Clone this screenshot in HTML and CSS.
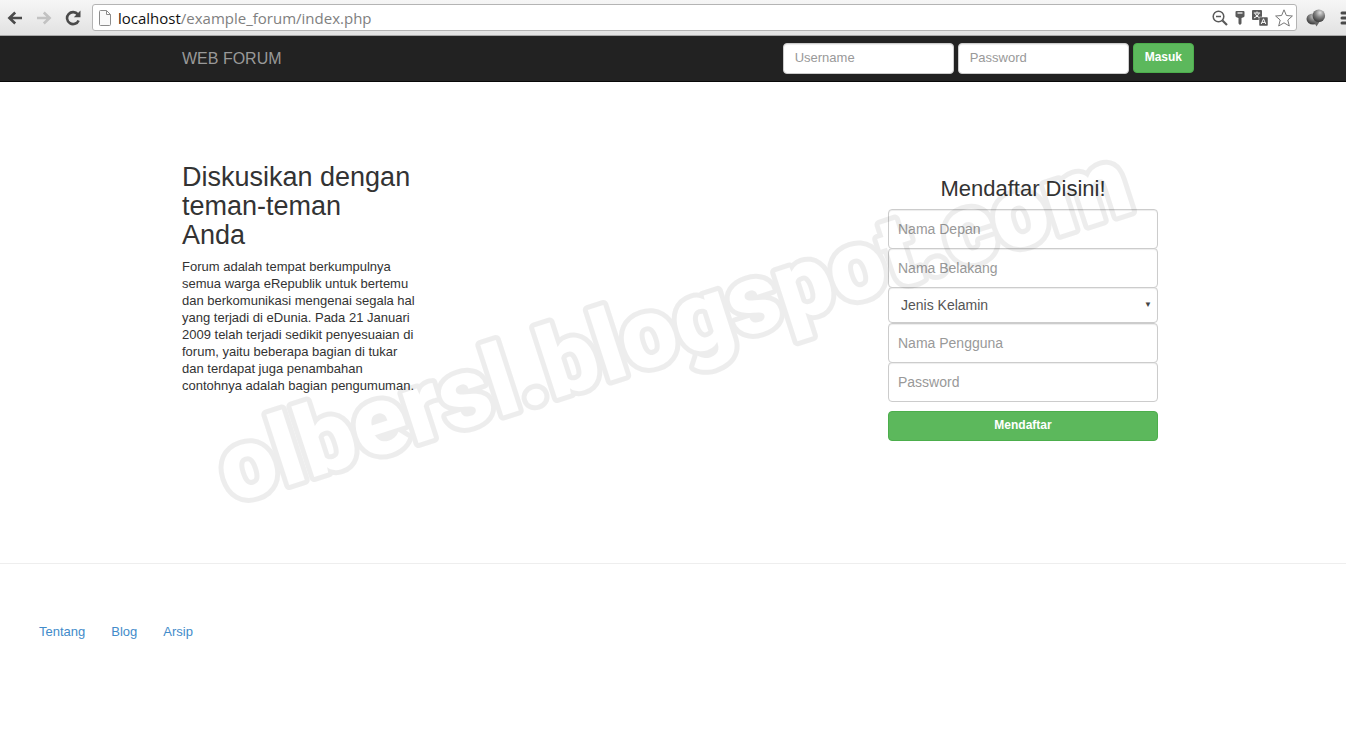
FILE: index.html
```html
<!DOCTYPE html>
<html lang="id">
<head>
    <meta charset="UTF-8">
    <meta name="viewport" content="width=device-width, initial-scale=1.0">
    <title>Web Forum</title>
    <link rel="stylesheet" href="styles.css">
</head>
<body>

    <div class="toolbar">
        <button class="tool" type="button" aria-label="Back">
            <svg width="16" height="14" viewBox="0 0 16 14" fill="none" stroke="#4a4a4a" stroke-width="2.6"><path d="M15 7H3M8.2 1.5L2.4 7l5.8 5.5"/></svg>
        </button>
        <button class="tool" type="button" aria-label="Forward">
            <svg width="16" height="14" viewBox="0 0 16 14" fill="none" stroke="#c2c2c2" stroke-width="2.6"><path d="M1 7h12M7.8 1.5L13.6 7l-5.8 5.5"/></svg>
        </button>
        <button class="tool" type="button" aria-label="Reload">
            <svg width="16" height="16" viewBox="0 0 16 16" fill="none" stroke="#4a4a4a" stroke-width="2.6"><path d="M12.8 4.4A6 6 0 1 0 13.6 10.4"/><path d="M15.5 .5V7.2H8.8z" fill="#4a4a4a" stroke="none"/></svg>
        </button>

        <div class="address">
            <svg width="12" height="16" viewBox="0 0 12 16" fill="#fafafa" stroke="#8c8c8c"><path d="M.5 1.5Q.5.5 1.5.5H7.5L11.5 4.5V14.5Q11.5 15.5 10.5 15.5H1.5Q.5 15.5.5 14.5zM7.5.5V4.5H11.5"/></svg>
            <div class="url"><span>localhost</span>/example_forum/index.php</div>
            <svg width="16" height="16" viewBox="0 0 16 16" fill="none" stroke="#5a5a5a"><circle cx="6.5" cy="6.5" r="5.3" stroke-width="1.5"/><path d="M4 6.5h5" stroke-width="1.5"/><path d="M10.5 10.5l4.5 4.5" stroke-width="2.2"/></svg>
            <svg width="10" height="16" viewBox="0 0 10 16"><path d="M1.5 1h7Q9.5 1 9.5 2V6Q9.5 7 8.5 7.3L6.5 8V13.5L5 15 3.5 13.5V8L1.5 7.3Q.5 7 .5 6V2Q.5 1 1.5 1z" fill="#5a5a5a"/><path d="M2.5 3h5" stroke="#fff" stroke-width="1.2"/></svg>
            <svg width="16" height="16" viewBox="0 0 16 16"><rect width="10" height="10" rx="1" fill="#5a5a5a"/><path d="M5 1.5v1.3M1.8 3h6.4M3 3.3Q4 6.5 8 8M7 3.3Q6 6.5 2 8" fill="none" stroke="#fff"/><rect x="7" y="7" width="9" height="9" rx="1" fill="#5a5a5a" stroke="#fff" stroke-width=".5"/><path d="M9.2 14L11.5 8.8 13.8 14M10 12.4h3" fill="none" stroke="#fff"/></svg>
            <svg width="18" height="18" viewBox="0 0 18 18" fill="#fff" stroke="#777" stroke-linejoin="round"><path d="M9 .8L11.4 6.5 17.4 7 12.8 11 14.3 17 9 13.8 3.7 17 5.2 11 .6 7 6.6 6.5z"/></svg>
        </div>

        <svg class="extension" width="20" height="18" viewBox="0 0 20 18">
            <defs>
                <radialGradient id="ball" cx=".6" cy=".25" r=".7"><stop offset="0" stop-color="#ddd"/><stop offset=".5" stop-color="#888"/><stop offset="1" stop-color="#444"/></radialGradient>
            </defs>
            <ellipse cx="7" cy="10" rx="6.5" ry="5.5" fill="url(#ball)"/>
            <path d="M8 13l2.5 4.5L14 12z" fill="#666"/>
            <circle cx="12.8" cy="6.8" r="6.3" fill="url(#ball)"/>
        </svg>
        <svg class="menu" width="14" height="14" viewBox="0 0 14 14" stroke="#4a4a4a" stroke-width="3" stroke-linecap="round"><path d="M2 2h12M2 7h12M2 12h12"/></svg>
    </div>

    <nav class="navbar">
        <div class="container">
            <a class="brand" href="#">WEB FORUM</a>
            <form class="login">
                <input type="text" placeholder="Username" aria-label="Username">
                <input type="password" placeholder="Password" aria-label="Password">
                <button class="btn" type="button">Masuk</button>
            </form>
        </div>
    </nav>

    <main class="main">
        <div class="container">
            <div class="intro">
                <h1>Diskusikan dengan teman-teman<br>Anda</h1>
                <p>Forum adalah tempat berkumpulnya semua warga eRepublik untuk bertemu dan berkomunikasi mengenai segala hal yang terjadi di eDunia. Pada 21 Januari 2009 telah terjadi sedikit penyesuaian di forum, yaitu beberapa bagian di tukar dan terdapat juga penambahan contohnya adalah bagian pengumuman.</p>
            </div>

            <form class="register">
                <h2>Mendaftar Disini!</h2>
                <input type="text" placeholder="Nama Depan" aria-label="Nama Depan">
                <input type="text" placeholder="Nama Belakang" aria-label="Nama Belakang">
                <div class="select">
                    <select aria-label="Jenis Kelamin">
                        <option>Jenis Kelamin</option>
                    </select>
                </div>
                <input type="text" placeholder="Nama Pengguna" aria-label="Nama Pengguna">
                <input type="password" placeholder="Password" aria-label="Password">
                <button class="btn" type="button">Mendaftar</button>
            </form>

            <!-- the mask keeps only the outer edge of the letters -->
            <svg class="watermark" width="1000" height="470" viewBox="0 0 1000 470">
                <mask id="outline" maskUnits="userSpaceOnUse" x="0" y="0" width="1000" height="470">
                    <g transform="rotate(-18 31 421)">
                        <text class="edge" x="31" y="421">olbersl.blogspot.com</text>
                        <text class="inside" x="31" y="421">olbersl.blogspot.com</text>
                    </g>
                </mask>
                <rect width="1000" height="470" fill="#000" opacity="0.065" mask="url(#outline)"/>
            </svg>
        </div>
    </main>

    <footer class="footer">
        <a href="#">Tentang</a>
        <a href="#">Blog</a>
        <a href="#">Arsip</a>
    </footer>

</body>
</html>
```
FILE: styles.css
```css
* {
    margin: 0;
    padding: 0;
    box-sizing: border-box;
}
body {
    background: #fff;
    color: #333;
    font-family: "Liberation Sans", Arial, sans-serif;
    font-size: 13px;
    line-height: 17px;
    overflow-x: hidden;
}
a {
    color: #428bca;
    text-decoration: none;
}
input, select, button {
    font-family: inherit;
}
svg {
    flex-shrink: 0;
}

/* toolbar */
.toolbar {
    display: flex;
    align-items: center;
    height: 36px;
    padding-left: 7px;
    background: linear-gradient(#f6f6f6, #e2e2e2);
    border-bottom: 1px solid #a8a8a8;
    overflow: hidden;
}
.tool {
    display: flex;
    width: 16px;
    margin-right: 13px;
    border: none;
    background: none;
}
.address {
    flex: 1;
    display: flex;
    align-items: center;
    gap: 7px;
    height: 27px;
    margin-left: -2px;
    padding: 0 3px 0 6px;
    background: #fff;
    border: 1px solid #b4b4b4;
    border-radius: 3px;
}
.url {
    flex: 1;
    font-family: "Open Sans", sans-serif;
    font-size: 15px;
    line-height: 24px;
    color: #808080;
}
.url span {
    color: #111;
}
.extension {
    margin-left: 9px;
}
.menu {
    margin: 0 -8px 0 14px;
}

/* navbar */
.container {
    position: relative;
    display: flex;
    justify-content: space-between;
    max-width: 1054px;
    margin: 0 auto;
    padding: 0 6px 0 36px;
}
.navbar {
    background: #222;
    border-bottom: 1px solid #080808;
}
.navbar .container {
    align-items: center;
    height: 45px;
}
.brand {
    color: #999;
    font-size: 16px;
    line-height: 20px;
}
.login {
    display: flex;
    gap: 4px;
}
.login input {
    width: 171px;
    height: 31px;
    padding: 0 11px 2px;
    font-size: 13px;
}
input, select {
    color: #555;
    background: #fff;
    border: 1px solid #ccc;
    border-radius: 4px;
    box-shadow: inset 0 1px 1px rgba(0, 0, 0, 0.075);
}
input::placeholder {
    color: #999;
}
.btn {
    height: 30px;
    padding: 0 11px 2px;
    font-size: 12px;
    font-weight: bold;
    color: #fff;
    background: #5cb85c;
    border: 1px solid #4cae4c;
    border-radius: 4px;
    cursor: pointer;
}

/* content */
.main {
    padding: 81px 0 122px;
    border-bottom: 1px solid #eee;
}
.intro {
    width: 238px;
}
.intro h1 {
    margin-bottom: 8px;
    font-size: 27px;
    font-weight: normal;
    line-height: 29px;
}
.register {
    display: flex;
    flex-direction: column;
    width: 270px;
    margin: 14px 36px 0 0;
}
.register h2 {
    margin-bottom: 8px;
    font-size: 22px;
    font-weight: normal;
    line-height: 24px;
    text-align: center;
}
.register input {
    height: 40px;
    margin-bottom: -1px;
    padding: 0 9px;
    font-size: 14px;
}
.select {
    position: relative;
}
.select select {
    display: block;
    width: 100%;
    height: 36px;
    padding: 0 12px;
    font-size: 14px;
    appearance: none;
}
.select::after {
    content: "▼";
    position: absolute;
    top: 9px;
    right: 6px;
    color: #444;
    font-size: 8px;
    pointer-events: none;
}
.register .btn {
    margin-top: 10px;
}

/* watermark */
.watermark {
    position: absolute;
    left: 54px;
    top: -80px;
    overflow: visible;
    pointer-events: none;
}
.watermark text {
    font-family: Roboto, sans-serif;
    font-size: 99px;
    font-weight: 900;
    stroke-linejoin: round;
}
.watermark .edge {
    fill: #fff;
    stroke: #fff;
    stroke-width: 10px;
}
.watermark .inside {
    fill: #000;
}

/* footer */
.footer {
    display: flex;
    gap: 26px;
    padding: 59px 39px;
}
```
